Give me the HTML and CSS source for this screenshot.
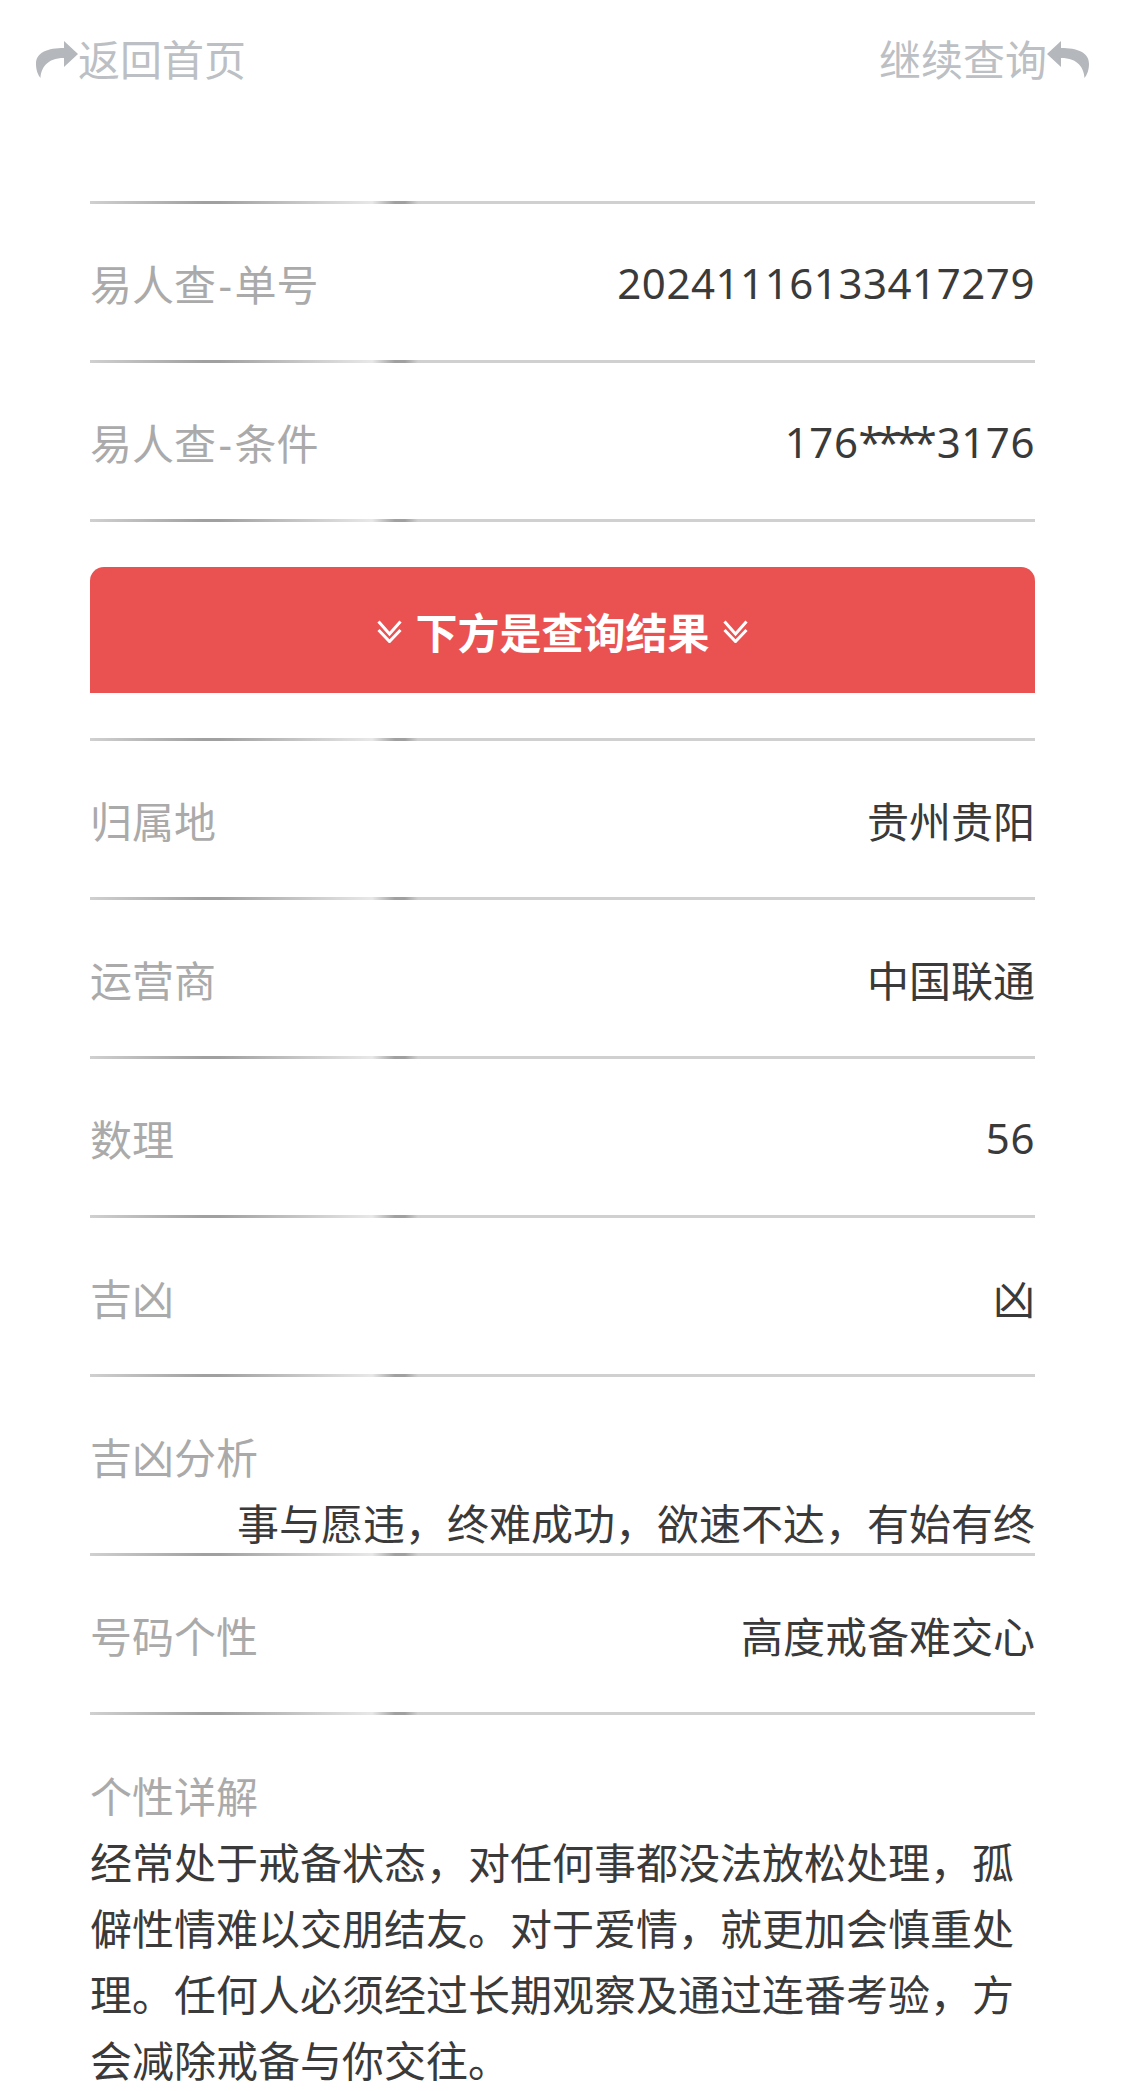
FILE: index.html
```html
<!DOCTYPE html>
<html lang="zh-CN">
<head>
    <meta charset="UTF-8">
    <meta name="viewport" content="width=device-width, initial-scale=1.0">
    <title>查询结果</title>
    <link rel="stylesheet" href="styles.css">
</head>
<body>

    <div class="top-nav">
        <a class="nav-link">
            <svg class="nav-icon" viewBox="0 0 42 38"><path d="M42 13 28 0V7C12 7 0 11 0 23C0 29 2 34 4.5 37C5 27 11 17 28 17V26Z"/></svg>
            <span>返回首页</span>
        </a>
        <a class="nav-link">
            <span>继续查询</span>
            <svg class="nav-icon" viewBox="0 0 42 38"><path d="M0 13 14 0V7C30 7 42 11 42 23C42 29 40 34 37.5 37C37 27 31 17 14 17V26Z"/></svg>
        </a>
    </div>

    <div class="container">
        <div class="line"></div>
        <div class="row"><span class="label">易人查<span class="dash">-</span>单号</span><span class="value num">20241116133417279</span></div>
        <div class="line"></div>
        <div class="row"><span class="label">易人查<span class="dash">-</span>条件</span><span class="value num">176<span class="stars">****</span>3176</span></div>
        <div class="line"></div>

        <div class="banner">
            <svg class="chevrons" viewBox="0 0 25 23"><path d="M1.5 1.5 12.5 14 23.5 1.5M1.5 10 12.5 21.5 23.5 10"/></svg>
            <span>下方是查询结果</span>
            <svg class="chevrons" viewBox="0 0 25 23"><path d="M1.5 1.5 12.5 14 23.5 1.5M1.5 10 12.5 21.5 23.5 10"/></svg>
        </div>

        <div class="line"></div>
        <div class="row"><span class="label">归属地</span><span class="value">贵州贵阳</span></div>
        <div class="line"></div>
        <div class="row"><span class="label">运营商</span><span class="value">中国联通</span></div>
        <div class="line"></div>
        <div class="row"><span class="label">数理</span><span class="value num">56</span></div>
        <div class="line"></div>
        <div class="row"><span class="label">吉凶</span><span class="value">凶</span></div>
        <div class="line"></div>

        <div class="block">
            <div class="label">吉凶分析</div>
            <div class="value right">事与愿违，终难成功，欲速不达，有始有终</div>
        </div>
        <div class="line"></div>
        <div class="row"><span class="label">号码个性</span><span class="value">高度戒备难交心</span></div>
        <div class="line"></div>

        <div class="block detail">
            <div class="label">个性详解</div>
            <div class="value">经常处于戒备状态，对任何事都没法放松处理，孤僻性情难以交朋结友。对于爱情，就更加会慎重处理。任何人必须经过长期观察及通过连番考验，方会减除戒备与你交往。</div>
        </div>
    </div>

</body>
</html>
```

FILE: styles.css
```css
body {
    font-family: "Noto Sans", "Noto Sans CJK SC", sans-serif;
    font-size: 42px;
    margin: 0;
    padding: 0;
    background-color: #fff;
}
.top-nav {
    display: flex;
    justify-content: space-between;
    padding: 27px 36px 0;
    height: 175px;
    box-sizing: border-box;
    color: #bcbfc4;
}
.nav-link {
    display: flex;
    align-items: flex-start;
    height: 66px;
    line-height: 66px;
}
.nav-icon {
    width: 42px;
    height: 38px;
    margin-top: 14px;
    fill: #b4b7bc;
}
.container {
    padding: 26px 90px 0;
}
.line {
    height: 3px;
    background: linear-gradient(to right, #d0d0d0 0, #a0a0a0 113px, #a0a0a0 130px, #e8e8e8 282px, #a0a0a0 305px, #a0a0a0 315px, #d0d0d0 328px, #d0d0d0 100%);
}
.row {
    display: flex;
    justify-content: space-between;
    align-items: center;
    height: 156px;
}
.label {
    color: #aaa;
}
.value {
    color: #3a3a3a;
}
.num {
    letter-spacing: 0.55px;
}
.dash {
    margin: 0 2.5px;
}
.stars {
    letter-spacing: -4.8px;
    margin-right: 4.8px;
}
.right {
    text-align: right;
}
.banner {
    display: flex;
    justify-content: center;
    align-items: center;
    gap: 13px;
    height: 126px;
    margin: 45px 0;
    background: #ea5252;
    border-radius: 14px 14px 0 0;
    color: #fff;
    font-weight: bold;
}
.chevrons {
    width: 25px;
    height: 23px;
    margin-top: 3px;
    fill: none;
    stroke: #fff;
    stroke-width: 3;
}
.block {
    padding-top: 48px;
    line-height: 66px;
}
.block .right {
    height: 62px;
}
.detail {
    padding-top: 49px;
}
```
